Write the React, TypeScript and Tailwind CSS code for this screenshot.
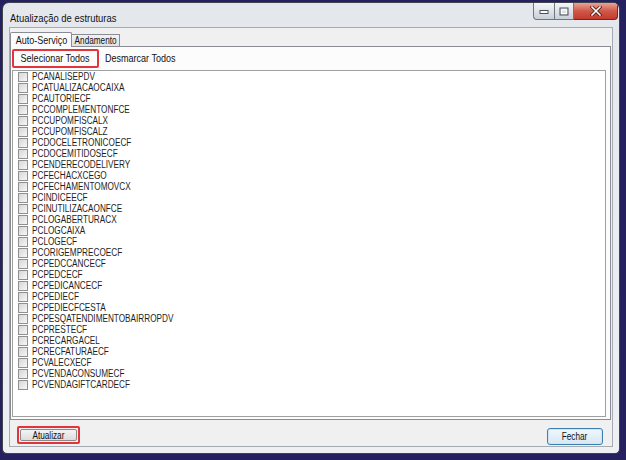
import React from 'react';

const items = [
  'PCANALISEPDV',
  'PCATUALIZACAOCAIXA',
  'PCAUTORIECF',
  'PCCOMPLEMENTONFCE',
  'PCCUPOMFISCALX',
  'PCCUPOMFISCALZ',
  'PCDOCELETRONICOECF',
  'PCDOCEMITIDOSECF',
  'PCENDERECODELIVERY',
  'PCFECHACXCEGO',
  'PCFECHAMENTOMOVCX',
  'PCINDICEECF',
  'PCINUTILIZACAONFCE',
  'PCLOGABERTURACX',
  'PCLOGCAIXA',
  'PCLOGECF',
  'PCORIGEMPRECOECF',
  'PCPEDCCANCECF',
  'PCPEDCECF',
  'PCPEDICANCECF',
  'PCPEDIECF',
  'PCPEDIECFCESTA',
  'PCPESQATENDIMENTOBAIRROPDV',
  'PCPRESTECF',
  'PCRECARGACEL',
  'PCRECFATURAECF',
  'PCVALECXECF',
  'PCVENDACONSUMECF',
  'PCVENDAGIFTCARDECF',
];

// the screenshot is squeezed horizontally, so text is narrowed to match
const squeeze = 'inline-block whitespace-nowrap scale-x-[0.82]';

function WindowControls() {
  return (
    <div className="flex h-[17px] self-start mr-[1px]">
      {/* minimize */}
      <div className="w-[22px] h-full border border-[#6f7680] border-t-0 rounded-bl-[4px] bg-linear-to-b from-[#f4f6f8] to-[#c9d0d8] flex items-center justify-center">
        <svg width="10" height="6" viewBox="0 0 10 6">
          <rect x="1" y="2.5" width="8" height="3" fill="#fff" stroke="#4a5058" strokeWidth="1" />
        </svg>
      </div>
      {/* maximize */}
      <div className="w-[19px] h-full border-b border-r border-[#6f7680] bg-linear-to-b from-[#f4f6f8] to-[#c9d0d8] flex items-center justify-center">
        <svg width="10" height="9" viewBox="0 0 10 9">
          <rect x="1" y="1" width="8" height="7" fill="none" stroke="#4a5058" strokeWidth="1" />
          <rect x="2.5" y="3" width="5" height="3.5" fill="none" stroke="#fff" strokeWidth="1" />
        </svg>
      </div>
      {/* close */}
      <div className="w-[44px] h-full border-b border-r border-[#6b2a24] rounded-br-[4px] bg-linear-to-b from-[#e8a393] via-[#d0584a] to-[#c13b2d] flex items-center justify-center">
        <svg width="12" height="10" viewBox="0 0 12 10">
          <path d="M2 1 L10 9 M10 1 L2 9" stroke="#4b1b16" strokeWidth="3.2" strokeLinecap="square" />
          <path d="M2 1 L10 9 M10 1 L2 9" stroke="#fff" strokeWidth="1.6" strokeLinecap="square" />
        </svg>
      </div>
    </div>
  );
}

function CheckRow({ label }: { label: string }) {
  return (
    <div className="h-[11px] flex items-center gap-[4px]">
      <span className="w-[10px] h-[10px] border border-[#8e8f8f] bg-linear-to-br from-[#d6d6d6] to-[#f7f7f7] shrink-0" />
      <span className={`${squeeze} origin-left text-[10px] leading-[11px] text-[#1e1e1e]`}>{label}</span>
    </div>
  );
}

export default function App() {
  return (
    <div className="w-[626px] h-[460px] bg-[#25215e] pt-[2px] pl-[2px] pr-[6px] pb-[6px] font-['Liberation_Sans',sans-serif]">
      <div className="h-full flex flex-col rounded-t-[7px] rounded-b-[5px] border border-[#3f434b] bg-linear-to-b from-[#e4e8ed] to-[#eef0f3] overflow-hidden">
        {/* title bar */}
        <div className="h-[24px] shrink-0 flex justify-between">
          <span className={`${squeeze} origin-left ml-[7px] mt-[8px] text-[11.5px] leading-[14px] text-[#111]`}>
            Atualização de estruturas
          </span>
          <WindowControls />
        </div>

        {/* client */}
        <div className="flex-1 flex flex-col mx-[6px] mb-[6px] border border-[#a5abb2] bg-[#f0f0f0]">
          {/* tabs */}
          <div className="flex items-end pt-[3px] h-[18px] shrink-0 text-[11px] text-[#111]">
            <div className="relative z-10 -mb-px w-[62px] h-[15px] border border-b-0 border-[#898c95] bg-[#fcfcfc] flex items-center justify-center rounded-t-[2px]">
              <span className={squeeze}>Auto-Serviço</span>
            </div>
            <div className="w-[48px] h-[12px] border border-l-0 border-b-0 border-[#898c95] bg-linear-to-b from-[#f2f2f2] to-[#e1e1e1] flex items-center justify-center text-[10px]">
              <span className={squeeze}>Andamento</span>
            </div>
          </div>

          {/* tab panel */}
          <div className="h-[374px] shrink-0 mr-[1px] border border-[#898c95] bg-[#fcfcfc] flex flex-col">
            <div className="h-[23px] shrink-0 flex items-start pt-[2px] text-[11px] text-[#111]">
              <div className="ml-[1px] w-[87px] h-[19px] border-2 border-[#e2353b] rounded-[2px] flex items-center justify-center">
                <span className={squeeze}>Selecionar Todos</span>
              </div>
              <span className={`${squeeze} origin-left ml-[6px] leading-[19px]`}>Desmarcar Todos</span>
            </div>
            <div className="ml-[1px] mr-[4px] h-[347px] border border-[#a0a0a0] bg-white pl-[5px] flex flex-col">
              {items.map((it) => (
                <CheckRow key={it} label={it} />
              ))}
            </div>
          </div>

          {/* bottom buttons */}
          <div className="flex-1 flex items-start justify-between pt-[6px] pl-[7px] pr-[9px] text-[10px] text-[#111]">
            <div className="w-[63px] h-[18px] border-2 border-[#e2353b] rounded-[2px] p-[1px]">
              <div className="h-full border border-[#8a8a8a] rounded-[2px] bg-linear-to-b from-[#f4f4f4] to-[#dcdcdc] flex items-center justify-center">
                <span className={squeeze}>Atualizar</span>
              </div>
            </div>
            <div className="mt-[2px] w-[56px] h-[17px] border border-[#3c7fb1] rounded-[3px] bg-linear-to-b from-[#f0f7fc] to-[#d7e7f2] shadow-[inset_0_0_0_1px_#cde6f7] flex items-center justify-center">
              <span className={squeeze}>Fechar</span>
            </div>
          </div>
        </div>
      </div>
    </div>
  );
}
